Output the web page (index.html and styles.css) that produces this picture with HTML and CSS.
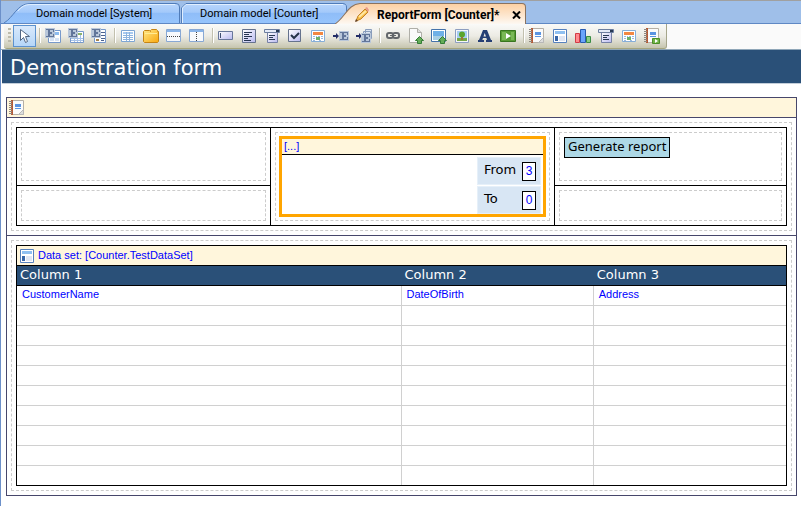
FILE: index.html
```html
<!DOCTYPE html>
<html lang="en">
<head>
<meta charset="utf-8">
<title>ReportForm [Counter]</title>
<link rel="stylesheet" href="styles.css">
</head>
<body>
<svg class="defs" aria-hidden="true">
  <defs>
    <linearGradient id="tab-blue" x2="0" y2="1"><stop offset="0" stop-color="#b9d6fc"/><stop offset=".45" stop-color="#a3c9fa"/><stop offset=".5" stop-color="#8fbdf8"/><stop offset="1" stop-color="#96c4fc"/></linearGradient>
    <linearGradient id="tab-orange" x2="0" y2="1"><stop offset="0" stop-color="#fdd0a2"/><stop offset=".5" stop-color="#fde3c8"/><stop offset="1" stop-color="#fdf8f2"/></linearGradient>
    <linearGradient id="lilac" x2="1" y2="1"><stop stop-color="#fff"/><stop offset="1" stop-color="#b9b9f0"/></linearGradient>
    <linearGradient id="folder" x2="1" y2="1"><stop stop-color="#ffe98a"/><stop offset="1" stop-color="#f9a70c"/></linearGradient>
    <symbol id="entity" viewBox="0 0 16 16"><path fill="#b9c7da" d="M0 0h10v10H0z"/><path fill="#62769a" d="M1 1h8v3H8V2H5v2h2v2H5v2h3V6h1v3H1V8h2V2H1z"/></symbol>
    <symbol id="report" viewBox="0 0 16 16"><path fill="#fbfbfb" stroke="#b5afa5" d="M2.500.500h12v14h-12z"/><path fill="#b55a36" d="M2 0h2v15H2z"/><path stroke="#8f8880" stroke-dasharray="1 1" stroke-width="3" d="M1.500 1v14"/><path fill="#5a94e2" d="M6 4h6v3H6zM6 8h6v1H6z"/><path fill="#ddd" stroke="#b8b8b8" d="M9.500 14.500 14.500 9.500v5z"/></symbol>
    <symbol id="view" viewBox="0 0 16 16"><path fill="#fff" stroke="#5681bd" d="M1.500 1.500h13v13h-13z"/><path fill="#8fc0f1" d="M3 3h10v3H3z"/><path fill="#3766a8" d="M3 8h3v5H3z"/><path fill="#dfe5f2" d="M7 8h6v5H7z"/></symbol>
    <symbol id="calendar" viewBox="0 0 16 16"><path fill="#fff" stroke="#86aed8" d="M1.500 2.500h13v11h-13z"/><path fill="#f28742" d="M3 4h10v3H3z"/><path fill="#9bb9de" d="M3 8h2v1H3zM6 8h1v1H6zM8 8h2v1H8zM11 8h2v1h-2zM3 10h2v1H3zM11 10h2v1h-2zM3 12h2v1H3zM9 12h2v1H9z"/><path fill="#6db06a" d="M6 9h4v3H6z"/></symbol>
    <symbol id="dropdown" viewBox="0 0 16 16"><path fill="url(#lilac)" stroke="#7681a5" d="M3.500 4.500h10v10h-10z"/><path fill="#e5ebf8" stroke="#6c7e9f" d="M.500 1.500h15v3H.500z"/><path fill="#283954" d="M12 2h3v2h-3zM5 7h6v1H5zM5 9h4v1H5zM5 11h6v1H5z"/></symbol>
    <symbol id="up" viewBox="0 0 16 16"><path fill="#65ad58" stroke="#337d36" d="M11.500 8.500 15.500 12.500h-2v3h-4v-3h-2z"/></symbol>
  </defs>
</svg>

<nav class="tabs" aria-label="Open documents">
  <button class="tab tab-system"><svg class="shape" viewBox="0 0 178 20" preserveAspectRatio="none"><path fill="url(#tab-blue)" stroke="#4f7bb9" d="M0 20C10 14 13 1 26 .500H173Q176.500.500 176.500 4V20"/><path fill="none" stroke="#e1efff" d="M14 8Q19 1.500 26 1.500H172"/></svg><span>Domain model [System]</span></button>
  <button class="tab tab-counter"><svg class="shape" viewBox="0 0 168 20" preserveAspectRatio="none"><path fill="url(#tab-blue)" stroke="#4f7bb9" d="M.500 20V5L5 .500H162Q166.500.500 166.500 4V20"/><path fill="none" stroke="#e1efff" d="M1.500 20V5L5 1.500H163"/></svg><span>Domain model [Counter]</span></button>
  <button class="tab tab-active"><svg class="shape" viewBox="0 0 191 20" preserveAspectRatio="none"><path fill="url(#tab-orange)" d="M0 20C10 14 13 1 25 .500H187Q190.500.500 190.500 4V20z"/><path fill="none" stroke="#8b735f" d="M0 20C10 14 13 1 25 .500H187Q190.500.500 190.500 4V20"/></svg>
    <svg class="pencil" viewBox="0 0 16 16"><path fill="#f7bb42" stroke="#c18127" d="M2 14 4 9 11 2 14 5 7 12z"/><path stroke="#ffe6a2" stroke-width="2" d="M5 10 12 4"/><path fill="#ea9a88" d="M11 1 13 0 15 3 14 5z"/><path fill="#614329" d="M1 15 2 12 4 14z"/></svg>
    <span>ReportForm [Counter]*</span>
    <svg class="close" viewBox="0 0 9 8"><path stroke="#000" stroke-width="2" d="M1 .500 8 7.500M8 .500 1 7.500"/></svg></button>
</nav>

<div class="toolbar-row">
<div class="toolbar" role="toolbar" aria-label="Form widgets">
  <span class="grip"></span>
  <button class="tool selected" aria-label="Select"><svg viewBox="0 0 16 16"><path fill="#fff" stroke="#526784" d="M4.500 1.500v11l3-3 2 5 2-1-2-5h4z"/></svg></button>
  <span class="sep"></span>
  <button class="tool" aria-label="Data view"><svg viewBox="0 0 16 16"><path fill="#fff" stroke="#7799cb" d="M3.500 2.500h12v12h-12z"/><path fill="#8dbcf0" d="M5 4h9v3H5z"/><path fill="#d6e2f4" d="M5 10h4v3H5zM10 10h4v3h-4z"/><use href="#entity"/></svg></button>
  <button class="tool" aria-label="Data grid"><svg viewBox="0 0 16 16"><path fill="#fff" stroke="#7799cb" d="M2.500 3.500h13v11h-13z"/><path fill="#8bb36c" d="M10 5h4v2h-4z"/><path stroke="#a6c2e8" d="M3 10.500h12M3 12.500h12M6.500 8v6M9.500 8v6M12.500 7v7"/><use href="#entity"/></svg></button>
  <button class="tool" aria-label="Template grid"><svg viewBox="0 0 16 16"><path fill="#fff" stroke="#7799cb" d="M3.500 1.500h11v13h-11z"/><path fill="#a6844e" d="M5 11h3v2H5z"/><path fill="#4c628e" d="M10 4h4v1h-4zM10 7h4v1h-4zM10 10h4v1h-4zM10 12h3v1h-3z"/><use href="#entity"/></svg></button>
  <span class="sep"></span>
  <button class="tool" aria-label="Table"><svg viewBox="0 0 16 16"><path fill="#fff" stroke="#7ea6d4" d="M1.500 2.500h13v11h-13z"/><path fill="#a8caf0" d="M3 4h3v2H3zM7 4h6v2H7z"/><path stroke="#8eb4df" d="M3 7.500h10M3 9.500h10M3 11.500h10M6.500 4v9M9.500 4v9"/></svg></button>
  <button class="tool" aria-label="Tab container"><svg viewBox="0 0 16 16"><path fill="url(#folder)" stroke="#c58414" d="M.500 13.500v-10l1-1h5l1 1V2.500l1-1h5l1 1v1h1v10l-1 1h-13z"/><path stroke="#ffeb93" d="M2 5.500h12"/></svg></button>
  <button class="tool" aria-label="Horizontal split pane"><svg viewBox="0 0 16 16"><path fill="#f7f9fc" stroke="#88a8d4" d="M.500 1.500h14v12H.500z"/><path fill="#89b4e8" d="M1 2h13v2H1z"/><path stroke="#444" stroke-dasharray="1 1" d="M1 8.500h13"/></svg></button>
  <button class="tool" aria-label="Vertical split pane"><svg viewBox="0 0 16 16"><path fill="#f7f9fc" stroke="#88a8d4" d="M.500 1.500h14v12H.500z"/><path fill="#89b4e8" d="M1 2h13v2H1z"/><path stroke="#444" stroke-dasharray="1 1" d="M7.500 4v9"/></svg></button>
  <span class="sep"></span>
  <button class="tool" aria-label="Text box"><svg viewBox="0 0 16 16"><path fill="url(#lilac)" stroke="#68779a" d="M.500 3.500h14v8H.500z"/><path fill="#404f70" d="M2 5h1v5H2z"/></svg></button>
  <button class="tool" aria-label="Text area"><svg viewBox="0 0 16 16"><path fill="url(#lilac)" stroke="#65728d" d="M1.500 1.500h13v13h-13z"/><path fill="#263450" d="M3 4h8v1H3zM3 6h5v1H3zM3 8h8v1H3zM3 10h4v1H3zM3 12h7v1H3z"/></svg></button>
  <button class="tool" aria-label="Drop-down"><svg viewBox="0 0 16 16"><use href="#dropdown"/></svg></button>
  <button class="tool" aria-label="Check box"><svg viewBox="0 0 16 16"><path fill="url(#lilac)" stroke="#65728d" d="M1.500 1.500h12v12h-12z"/><path fill="none" stroke="#243249" stroke-width="2" d="M4 7l3 3 5-5"/></svg></button>
  <button class="tool" aria-label="Date picker"><svg viewBox="0 0 16 16"><use href="#calendar"/></svg></button>
  <button class="tool" aria-label="Reference selector"><svg viewBox="0 0 16 16"><path fill="#222c66" d="M0 7h3V5l3 3-3 3V9H0z"/><svg x="6" y="3" width="16" height="16"><use href="#entity"/></svg></svg></button>
  <button class="tool" aria-label="Reference set selector"><svg viewBox="0 0 16 16"><path fill="#222c66" d="M0 7h3V5l3 3-3 3V9H0z"/><path fill="#dce5f2" stroke="#899dbb" d="M9.500 1.500h6v9h-6zM7.500 3.500h7v9h-7z"/><svg x="5" y="5" width="16" height="16"><use href="#entity"/></svg></svg></button>
  <span class="sep"></span>
  <button class="tool" aria-label="Link"><svg viewBox="0 0 16 16"><g fill="none" stroke="#63676b" stroke-width="2"><rect x="2" y="5" width="6" height="5" rx="2"/><rect x="8" y="5" width="6" height="5" rx="2"/><path stroke-width="1" d="M5 7.500h6"/></g></svg></button>
  <button class="tool" aria-label="File manager"><svg viewBox="0 0 16 16"><path fill="#fafafa" stroke="#afafa8" d="M1.500.500h8l4 4v10h-12z"/><path fill="#ddd" stroke="#afafa8" d="M9.500.500v4h4"/><use href="#up"/></svg></button>
  <button class="tool" aria-label="Image uploader"><svg viewBox="0 0 16 16"><path fill="#fff" stroke="#4473ab" d="M.500 1.500h14v12H.500z"/><path fill="#6fb0e7" d="M2 3h11v5H2z"/><path fill="#a8cee5" d="M2 8h11v4H2z"/><use href="#up"/></svg></button>
  <button class="tool" aria-label="Image viewer"><svg viewBox="0 0 16 16"><path fill="#f6f7f9" stroke="#8d9ec0" d="M1.500 1.500h13v13h-13z"/><path fill="#a6cdf3" d="M3 3h10v7H3z"/><path fill="#77a746" d="M3 10h10v3H3z"/><circle cx="8" cy="6.500" r="3" fill="#59a42d"/><path fill="#9c7737" d="M7 9h2v3H7z"/></svg></button>
  <button class="tool" aria-label="Text"><svg viewBox="0 0 16 16"><path fill="#253f74" fill-rule="evenodd" d="M6 2h4l4 10h1v2H9v-2h1l-.600-2H6l-.700 2H7v2H1v-2h1zM7.700 5 6.500 8.500h2.500z"/></svg></button>
  <button class="tool" aria-label="Action button"><svg viewBox="0 0 16 16"><path fill="#589b35" stroke="#38761f" d="M.500 2.500h15v11H.500z"/><path fill="#79b855" d="M2 4h4v8H2zM11 4h3v8h-3z"/><path fill="#fff" d="M6 5l5 3-5 3z"/></svg></button>
  <span class="sep"></span>
  <button class="tool" aria-label="Report"><svg viewBox="0 0 16 16"><use href="#report"/></svg></button>
  <button class="tool" aria-label="Report view"><svg viewBox="0 0 16 16"><use href="#view"/></svg></button>
  <button class="tool" aria-label="Chart"><svg viewBox="0 0 16 16"><path fill="#ff8a8e" stroke="#d23b45" d="M.500 5.500h4v9h-4z"/><path fill="#6aa4fa" stroke="#285ab0" d="M5.500 1.500h5v13h-5z"/><path fill="#8bce86" stroke="#3a8d44" d="M11.500 8.500h4v6h-4z"/></svg></button>
  <button class="tool" aria-label="Report drop-down"><svg viewBox="0 0 16 16"><use href="#dropdown"/></svg></button>
  <button class="tool" aria-label="Report date range"><svg viewBox="0 0 16 16"><use href="#calendar"/></svg></button>
  <button class="tool" aria-label="Generate report"><svg viewBox="0 0 16 16"><use href="#report"/><path fill="#71b347" stroke="#4a8e27" d="M8.500 10.500h7v5h-7z"/><path fill="#fff" d="M11 11l3 2-3 2z"/></svg></button>
</div>
</div>

<h1>Demonstration form</h1>

<main class="form">
  <div class="bar"><svg class="bar-icon" viewBox="0 0 16 16" aria-hidden="true"><use href="#report"/></svg></div>
  <section class="row">
    <div class="slot">
      <div class="layout">
        <div class="cell"><div class="slot"></div></div>
        <div class="cell middle"><div class="slot">
          <div class="filter">
            <div class="filter-head">[...]</div>
            <div class="fields">
              <div class="field"><label for="from">From</label><input id="from" value="3"></div>
              <div class="field"><label for="to">To</label><input id="to" value="0"></div>
            </div>
          </div>
        </div></div>
        <div class="cell right"><div class="slot"><button class="generate">Generate report</button></div></div>
        <div class="cell lower"><div class="slot"></div></div>
        <div class="cell lower right"><div class="slot"></div></div>
      </div>
    </div>
  </section>
  <section class="row">
    <div class="slot">
      <div class="dataset">
        <div class="bar"><svg class="bar-icon" viewBox="0 0 16 16" aria-hidden="true"><use href="#view"/></svg><span>Data set: [Counter.TestDataSet]</span></div>
        <table>
          <thead><tr><th class="wide">Column 1</th><th>Column 2</th><th>Column 3</th></tr></thead>
          <tbody>
            <tr><td>CustomerName</td><td>DateOfBirth</td><td>Address</td></tr>
            <tr><td></td><td></td><td></td></tr>
            <tr><td></td><td></td><td></td></tr>
            <tr><td></td><td></td><td></td></tr>
            <tr><td></td><td></td><td></td></tr>
            <tr><td></td><td></td><td></td></tr>
            <tr><td></td><td></td><td></td></tr>
            <tr><td></td><td></td><td></td></tr>
            <tr><td></td><td></td><td></td></tr>
            <tr><td></td><td></td><td></td></tr>
          </tbody>
        </table>
      </div>
    </div>
  </section>
</main>
</body>
</html>
```
FILE: styles.css
```css
* { box-sizing: border-box; }

body {
  margin: 0;
  min-height: 100vh;
  border-left: 1px solid #6c90c9;
  background: #fff;
  color: #000;
  font: 11px/14px "Liberation Sans", sans-serif;
}

button, input { font: inherit; color: inherit; margin: 0; }
svg { display: block; flex: none; }
.defs { position: absolute; width: 0; height: 0; }

/* Document tabs */
.tabs {
  display: flex;
  align-items: flex-end;
  height: 24px;
  margin-left: -1px;
  padding-left: 4px;
  border-top: 1px solid #a0a0a0;
  border-bottom: 1px solid #5f88c4;
  background: #9fbfe9;
}
.tab {
  position: relative;
  display: flex;
  align-items: center;
  height: 20px;
  border: 0;
  padding: 2px 0 0;
  background: none;
  font-family: Roboto, sans-serif;
  white-space: nowrap;
}
.tab span { position: relative; }
.shape { position: absolute; inset: 0; width: 100%; height: 100%; }
.tab-system { width: 177px; padding-left: 32px; }
.tab-counter { width: 167px; padding-left: 19px; }
.tab-active {
  width: 191px;
  height: 21px;
  margin: 0 0 -1px -13px;
  padding-left: 19px;
  font-size: 12px;
  font-weight: bold;
}
.pencil { position: relative; width: 16px; height: 16px; margin-right: 7px; }
.close { position: relative; width: 9px; height: 8px; margin-left: auto; margin-right: 5px; }

/* Widget toolbar */
.toolbar-row {
  display: flex;
  padding-left: 3px;
  border-bottom: 1px solid #8fa6b8;
  background: #fafafa;
}
.toolbar {
  display: flex;
  height: 25px;
  padding: 1px 2px 2px 2px;
  border-right: 1px solid #a5a58a;
  border-bottom: 1px solid #a5a57d;
  border-radius: 3px 0 3px 3px;
  background: linear-gradient(#fafaf8, #ecebe4 50%, #c6c5af);
}
.grip {
  width: 3px;
  margin: 3px 2px 3px 2px;
  background: repeating-linear-gradient(#bdbbac 0 2px, transparent 2px 4px);
}
.tool {
  display: flex;
  align-items: center;
  width: 23px;
  height: 22px;
  padding: 0 0 0 3px;
  border: 0;
  background: none;
}
.tool svg { width: 16px; height: 16px; }
.selected { padding-left: 2px; border: 1px solid #5c92cf; background: linear-gradient(#d9e9fb, #b5d6f8); }
.sep {
  width: 2px;
  margin: 3px 1px 3px 3px;
  border-left: 1px solid #c2c0ae;
  border-right: 1px solid #fff;
}

h1 {
  margin: 0 0 13px 1px;
  padding: 4px 8px 1px;
  border-bottom: 1px solid #c3ced9;
  background: #2a5078;
  color: #fff;
  font: 21px/28px "DejaVu Sans", sans-serif;
}

/* Form canvas */
.form { margin: 0 4px 10px 5px; border: 1px solid #47476b; }
.bar {
  display: flex;
  align-items: center;
  height: 19px;
  padding-left: 2px;
  background: #fff6dc;
  color: #00f;
}
.bar span { padding-bottom: 2px; }
.bar-icon { width: 16px; height: 16px; margin-right: 3px; }
.row { padding: 4px; border-top: 1px solid #47476b; }
.slot { border: 1px dashed #ccc; }
.row > .slot { padding: 4px; }

.layout {
  display: grid;
  grid-template-columns: 254fr 284fr 231fr;
  grid-template-rows: 57px 40px;
  border: 1px solid #000;
}
.cell { display: grid; padding: 4px; border-right: 1px solid #000; }
.middle { grid-row: span 2; }
.lower { border-top: 1px solid #000; }
.lower:not(.right) { grid-column: 1; }
.right { grid-column: 3; border-right: 0; }
.right .slot { padding: 4px; }
.middle .slot { padding: 3px; }

.filter { border: 3px solid orange; }
.filter-head {
  height: 16px;
  padding-left: 2px;
  border-bottom: 1px solid #000;
  background: #fff6dc;
  color: #00f;
}
.fields { display: grid; justify-content: end; gap: 1px; padding: 2px 2px 0 0; }
.field {
  display: flex;
  align-items: center;
  justify-content: space-between;
  width: 64px;
  height: 28px;
  padding: 0 4px 0 6px;
  border: 1px solid #e6f0f9;
  background: #d8e6f4;
  font: 13px/16px "DejaVu Sans", sans-serif;
}
.field label { padding-bottom: 2px; }
.field input {
  width: 14px;
  height: 19px;
  padding: 0;
  border: 1px solid #000;
  border-radius: 0;
  background: #fff;
  color: #00f;
  font: 12px/16px "Liberation Sans", sans-serif;
  text-align: center;
}
.generate {
  display: block;
  height: 21px;
  padding: 0 3px 2px;
  border: 1px solid #000;
  background: #add8e6;
  font: 13px/17px "Noto Sans", sans-serif;
  white-space: nowrap;
}

/* Data set table */
.dataset { border: 1px solid #000; }
table { width: 100%; table-layout: fixed; border-collapse: separate; border-spacing: 0; }
th {
  height: 21px;
  padding: 0 3px 2px;
  border: solid #000;
  border-width: 1px 0;
  background: #2a5078;
  color: #fff;
  font: 13px/16px "DejaVu Sans", sans-serif;
  text-align: left;
}
.wide { width: 50%; }
td {
  height: 20px;
  padding: 0 5px 4px;
  border: solid #d0d0d0;
  border-width: 0 1px 1px 0;
  color: #00f;
}
td:last-child { border-right: 0; }
tr:last-child td { border-bottom: 0; height: 19px; }
```
